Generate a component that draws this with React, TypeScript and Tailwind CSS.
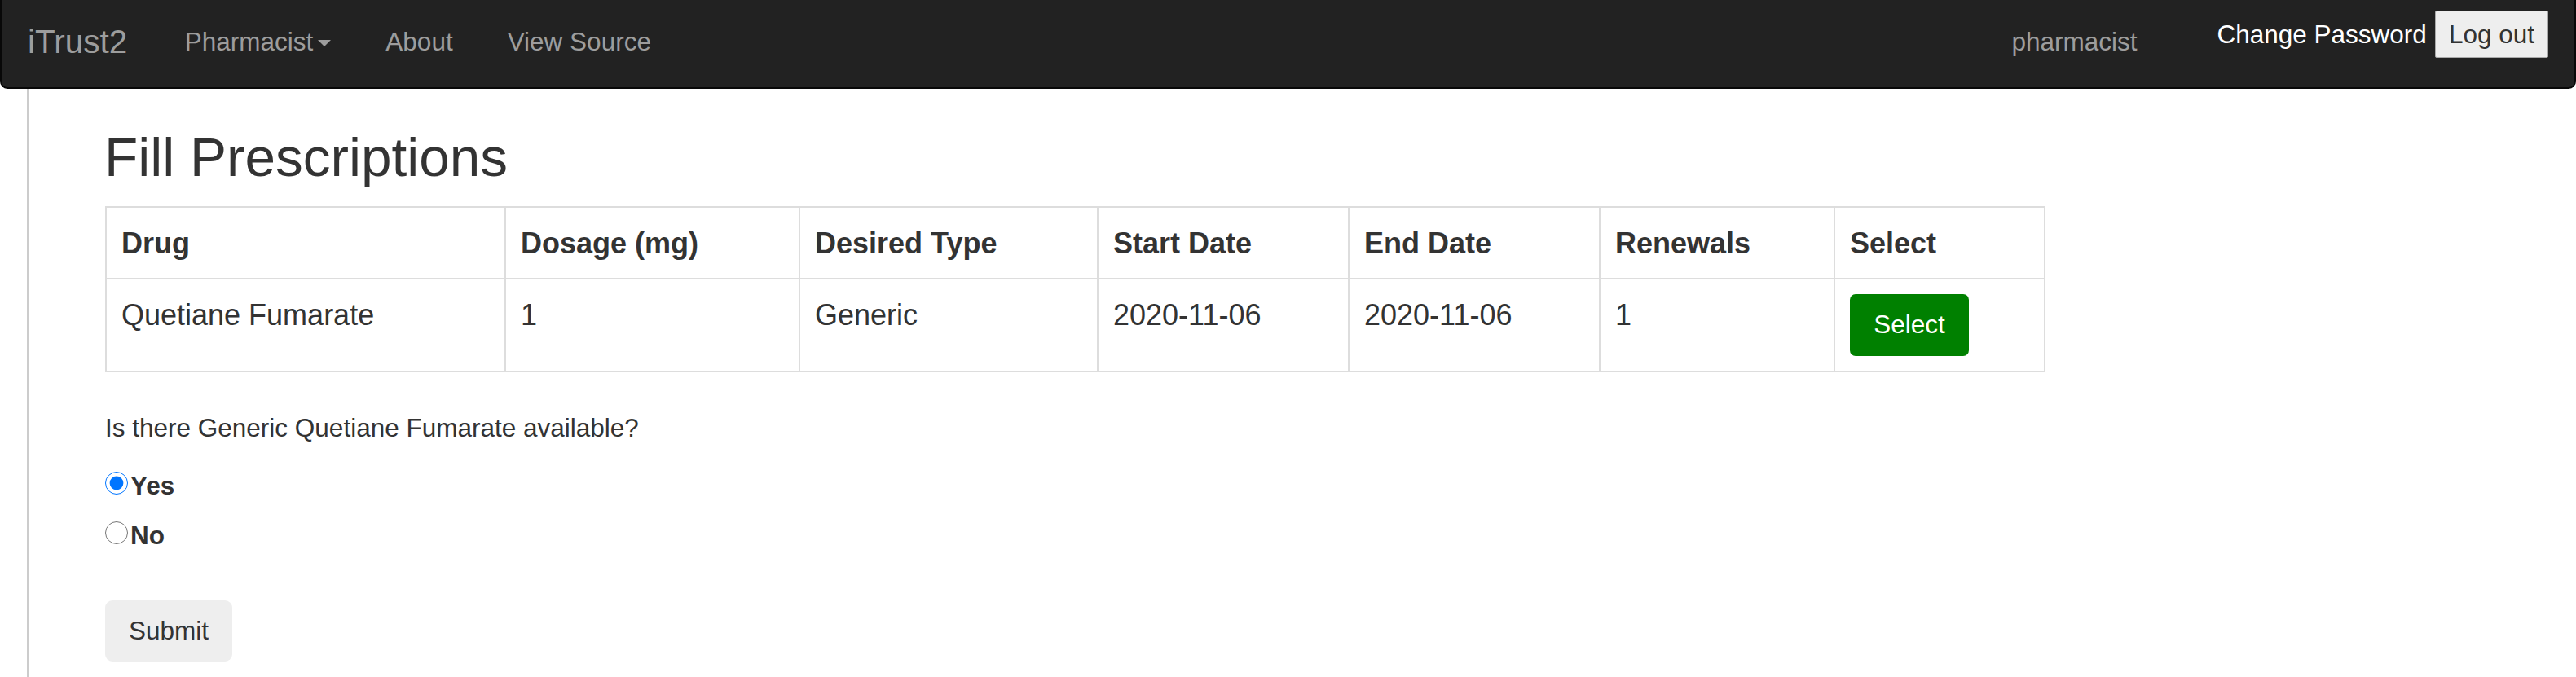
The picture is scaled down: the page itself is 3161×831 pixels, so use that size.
const columns = ['Drug', 'Dosage (mg)', 'Desired Type', 'Start Date', 'End Date', 'Renewals', 'Select']
const row = ['Quetiane Fumarate', '1', 'Generic', '2020-11-06', '2020-11-06', '1']

function Navbar() {
  return (
    <nav className="flex h-[109px] shrink-0 items-start rounded-b-[9px] border-2 border-t-0 border-[#080808] bg-[#222] text-[31.5px] leading-[45px] text-[#9d9d9d]">
      <a className="pl-[32px] pr-[37px] pt-[29px] text-[40.5px]">iTrust2</a>
      <a className="flex items-start px-[33.5px] pt-[29px]">
        Pharmacist
        <span className="ml-[6px] mt-[20px] h-0 w-0 border-x-[8.5px] border-t-[8.5px] border-x-transparent border-t-[#9d9d9d]" />
      </a>
      <a className="px-[33.5px] pt-[29px]">About</a>
      <a className="px-[33.5px] pt-[29px]">View Source</a>

      <div className="ml-auto flex items-start pr-[32px]">
        <span className="pt-[29px]">pharmacist</span>
        <a className="ml-[98px] pt-[20px] text-white">Change Password</a>
        <button className="ml-[10px] mt-[13px] rounded-[2px] border border-[#aaa] bg-[#eee] px-[16px] pb-[5px] pt-[6px] text-[#333]">
          Log out
        </button>
      </div>
    </nav>
  )
}

export default function App() {
  return (
    <div className="flex h-screen flex-col overflow-hidden bg-white font-['Liberation_Sans',Arial,sans-serif] text-[#333]">
      <Navbar />

      <main className="ml-[33px] flex-1 border-l-2 border-[#ccc] pl-[94px] pt-[47px]">
        <h1 className="-ml-[1px] mb-[23px] text-[67.5px] font-normal leading-[74px]">Fill Prescriptions</h1>

        <div className="grid w-fit grid-cols-[490px_361px_366px_308px_308px_288px_258px] border-l-2 border-t-2 border-[#ddd] text-[36px] leading-[51px]">
          {columns.map((col) => (
            <div key={col} className="border-b-2 border-r-2 border-[#ddd] px-[18px] pb-[17px] pt-[18px] font-bold">
              {col}
            </div>
          ))}
          {row.map((cell, i) => (
            <div key={i} className="border-b-2 border-r-2 border-[#ddd] px-[18px] py-[18px]">
              {cell}
            </div>
          ))}
          <div className="border-b-2 border-r-2 border-[#ddd] px-[18px] py-[18px]">
            <button className="block h-[76px] w-[146px] rounded-[7px] bg-[#008000] pb-[2px] text-[31.5px] leading-[45px] text-white">
              Select
            </button>
          </div>
        </div>

        <p className="mt-[46px] text-[31.5px] leading-[45px]">Is there Generic Quetiane Fumarate available?</p>

        <div className="mt-[26px] flex flex-col gap-[16px] text-[31.5px] font-bold leading-[45px]">
          <label className="flex items-start">
            <input type="radio" name="available" defaultChecked className="mr-[3px] mt-[5px] h-[28px] w-[28px]" />
            Yes
          </label>
          <label className="flex items-start">
            <input type="radio" name="available" className="mr-[3px] mt-[5px] h-[28px] w-[28px]" />
            No
          </label>
        </div>

        <button className="mt-[57px] block h-[75px] rounded-[9px] bg-[#eee] px-[29px] text-[31.5px] leading-[45px] text-[#333]">
          Submit
        </button>
      </main>
    </div>
  )
}
